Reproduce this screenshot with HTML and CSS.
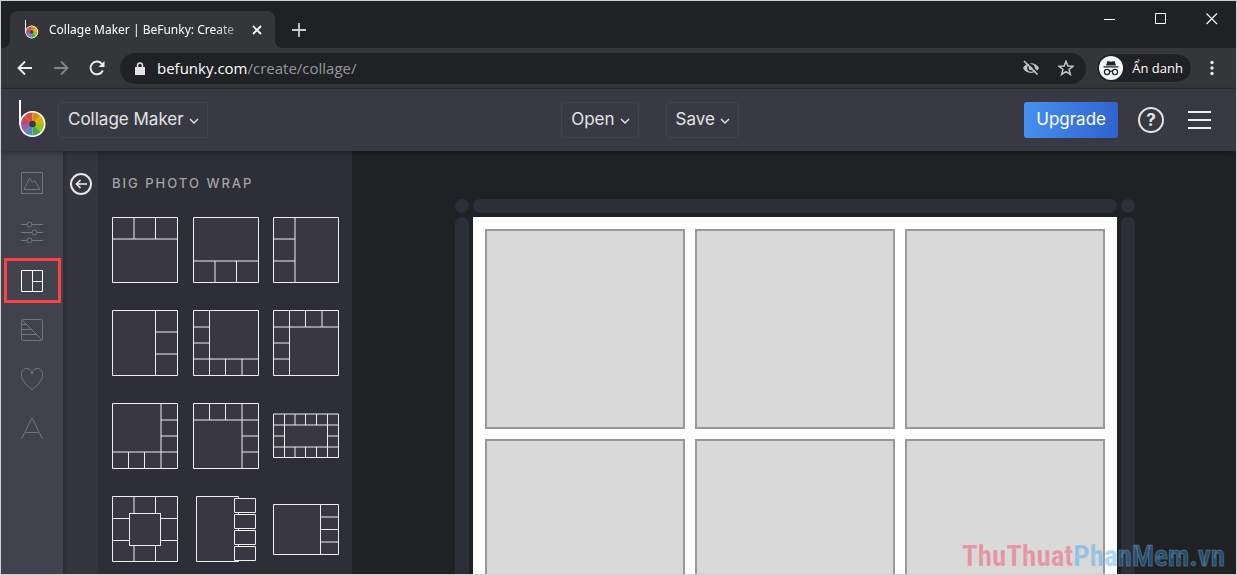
FILE: index.html
```html
<!DOCTYPE html>
<html lang="en">
<head>
<meta charset="utf-8">
<title>Collage Maker | BeFunky</title>
<link rel="stylesheet" href="styles.css">
</head>
<body>
<svg class="defs" aria-hidden="true">
  <symbol id="logo" viewBox="0 0 28 38">
    <g transform="translate(13.5 24)">
      <circle r="13" fill="#fff"/>
      <path d="M0 0-11.500 0A11.500 11.500 0 0 1-8.100-8.100Z" fill="#c6495b"/>
      <path d="M0 0-8.100-8.100A11.500 11.500 0 0 1 0-11.500Z" fill="#ce4f3c"/>
      <path d="M0 0 0-11.500A11.500 11.500 0 0 1 8.100-8.100Z" fill="#e08a16"/>
      <path d="M0 0 8.100-8.100A11.500 11.500 0 0 1 11.500 0Z" fill="#d3b60a"/>
      <path d="M0 0 11.500 0A11.500 11.500 0 0 1 8.100 8.100Z" fill="#96c21c"/>
      <path d="M0 0 8.100 8.100A11.500 11.500 0 0 1 0 11.500Z" fill="#4ca64a"/>
      <path d="M0 0 0 11.500A11.500 11.500 0 0 1-8.100 8.100Z" fill="#5b84c4"/>
      <path d="M0 0-8.100 8.100A11.500 11.500 0 0 1-11.500 0Z" fill="#9560a6"/>
      <circle r="3.300" fill="#393943"/>
    </g>
    <path d="M0 0H2V25H0Z" fill="#fff"/>
  </symbol>
  <symbol id="chevron" viewBox="0 0 10 6"><path d="M1 1 5 5 9 1" fill="none" stroke="currentColor" stroke-width="1.400"/></symbol>
</svg>

<div class="window">
  <header class="titlebar">
    <div class="tab">
      <svg class="favicon" width="14" height="19"><use href="#logo"/></svg>
      <span class="tab-title">Collage Maker | BeFunky: Create</span>
      <button class="plain" aria-label="Close tab"><svg width="10" height="10"><path d="M1 1 9 9M9 1 1 9" stroke="#fff" stroke-width="1.800"/></svg></button>
    </div>
    <button class="plain new-tab" aria-label="New tab"><svg width="14" height="14"><path d="M7 0V14M0 7H14" stroke="#ccc" stroke-width="1.800"/></svg></button>
    <div class="window-controls">
      <button class="plain" aria-label="Minimize"><svg width="12" height="12"><path d="M0 6.500H11" stroke="#fff"/></svg></button>
      <button class="plain" aria-label="Maximize"><svg width="12" height="12"><path d="M.5.5H10.500V10.500H.5Z" fill="none" stroke="#fff"/></svg></button>
      <button class="plain" aria-label="Close"><svg width="12" height="12"><path d="M.5.5 11 11M11 .5.5 11" stroke="#fff" stroke-width="1.100"/></svg></button>
    </div>
  </header>

  <nav class="toolbar" aria-label="Browser">
    <div class="history">
      <button class="plain" aria-label="Back"><svg width="16" height="16" fill="none" stroke="#eee" stroke-width="1.800"><path d="M15 8H2M8 1.500 1.500 8 8 14.500"/></svg></button>
      <button class="plain" aria-label="Forward"><svg width="16" height="16" fill="none" stroke="#85868a" stroke-width="1.800"><path d="M1 8H14M8 1.500 14.500 8 8 14.500"/></svg></button>
      <button class="plain" aria-label="Reload"><svg width="16" height="16"><path d="M13.800 10.500A6.400 6.400 0 1 1 12.700 3.600L14 5" fill="none" stroke="#eee" stroke-width="1.900"/><path d="M15.500 1V7H9.500Z" fill="#eee"/></svg></button>
    </div>
    <div class="address">
      <svg width="10" height="13"><path d="M0 5H1.800V3.500A3.200 3.200 0 0 1 8.200 3.500V5H10V13H0ZM3.300 5H6.700V3.500A1.700 1.700 0 0 0 3.300 3.500Z" fill="#e2e3e5" fill-rule="evenodd"/></svg>
      <span class="url"><b>befunky.com</b>/create/collage/</span>
      <button class="plain" aria-label="Third-party cookies blocked"><svg width="18" height="16"><path d="M1 8C4 1.500 14 1.500 17 8 14 14.500 4 14.500 1 8Z" fill="#bfc0c3"/><circle cx="9" cy="8" r="3.800" fill="#202125"/><circle cx="9" cy="8" r="2.300" fill="#bfc0c3"/><path d="M4 .5 17 13.500" stroke="#202125" stroke-width="1.600"/><path d="M2 1 15.500 14.500" stroke="#bfc0c3" stroke-width="1.700"/></svg></button>
      <button class="plain" aria-label="Bookmark"><svg width="16" height="16"><path d="M8 1.200 9.900 6 15 6.300 11 9.500 12.400 14.500 8 11.700 3.600 14.500 5 9.500 1 6.300 6.100 6Z" fill="none" stroke="#c4c5c7" stroke-width="1.500"/></svg></button>
    </div>
    <div class="incognito">
      <svg width="24" height="24"><circle cx="12" cy="12" r="12" fill="#f3f4f6"/><path d="M8.500 5 12 5.700 15.500 5 17 9.500H7ZM4.500 10.300H19.500V11.500H4.500Z" fill="#222327"/><g fill="none" stroke="#222327" stroke-width="1.200"><circle cx="8" cy="16" r="2.600"/><circle cx="16" cy="16" r="2.600"/><path d="M10.500 15.500Q12 14.800 13.500 15.500"/></g></svg>
      <span>Ẩn danh</span>
    </div>
    <button class="plain" aria-label="Browser menu"><svg width="4" height="16" fill="#e8e8ea"><circle cx="2" cy="2.500" r="1.700"/><circle cx="2" cy="8" r="1.700"/><circle cx="2" cy="13.500" r="1.700"/></svg></button>
  </nav>

  <header class="app-header">
    <div class="group">
      <svg class="logo" width="28" height="38" role="img" aria-label="BeFunky"><use href="#logo"/></svg>
      <button class="menu-button">Collage Maker <svg width="10" height="6"><use href="#chevron"/></svg></button>
    </div>
    <div class="group center">
      <button class="menu-button">Open <svg width="10" height="6"><use href="#chevron"/></svg></button>
      <button class="menu-button">Save <svg width="10" height="6"><use href="#chevron"/></svg></button>
    </div>
    <div class="group end">
      <button class="upgrade">Upgrade</button>
      <button class="help" aria-label="Help">?</button>
      <button class="plain" aria-label="Menu"><svg width="23" height="20"><path d="M0 2H23M0 10H23M0 18H23" stroke="#eee" stroke-width="2"/></svg></button>
    </div>
  </header>

  <div class="workspace">
    <nav class="tools" aria-label="Tools">
      <button class="tool" aria-label="Images"><svg width="22" height="22"><path d="M.5.5H21.500V21.500H.5ZM3 17.500 8.500 6 11.500 10.500 13.500 8.500 19 17.500Z"/></svg></button>
      <button class="tool" aria-label="Customize"><svg width="22" height="22"><path d="M0 3.500H6M11 3.500H22M0 11.500H11M16 11.500H22M0 19.500H6M11 19.500H22"/><circle cx="8.500" cy="3.500" r="2.400"/><circle cx="13.500" cy="11.500" r="2.400"/><circle cx="8.500" cy="19.500" r="2.400"/></svg></button>
      <button class="tool active" aria-label="Layouts"><svg width="22" height="22"><path d="M.5.5H21.500V21.500H.5ZM11.500.5V21.500M11.500 11.500H21.500"/></svg></button>
      <button class="tool" aria-label="Patterns"><svg width="22" height="22"><rect x=".5" y=".5" width="21" height="21" rx="2"/><path d="M1 1 21 21M1 5.500H5M1 10.500H10M1 15.500H16"/></svg></button>
      <button class="tool" aria-label="Graphics"><svg width="22" height="22"><path d="M11 21.500C4 16.500.5 12 .5 6.500.5 2.500 3 .5 5.500.5 8.500.5 11 2.500 11 6 11 2.500 13.500.5 16.500.5 19 .5 21.500 2.500 21.500 6.500 21.500 12 18 16.500 11 21.500Z"/></svg></button>
      <button class="tool" aria-label="Text"><svg width="22" height="22"><path d="M.5 22 11 .8 21.500 22M4.500 15.500H17.500"/></svg></button>
    </nav>
    <div class="back-strip">
      <button class="back" aria-label="Back to layouts"><svg width="12" height="10"><path d="M12 5H1.500M5.500 1 1.500 5 5.500 9" fill="none" stroke="#eee" stroke-width="1.600"/></svg></button>
    </div>
    <section class="panel">
      <h2>BIG PHOTO WRAP</h2>
      <div class="layouts">
        <button class="plain" aria-label="Layout 1"><svg class="thumb" width="66" height="66"><path d="M.5.5H65.500V65.500H.5ZM.5 22H65.500M22 .5V22M43.500.5V22"/></svg></button>
        <button class="plain" aria-label="Layout 2"><svg class="thumb" width="66" height="66"><path d="M.5.5H65.500V65.500H.5ZM.5 44H65.500M22 44V65.500M43.500 44V65.500"/></svg></button>
        <button class="plain" aria-label="Layout 3"><svg class="thumb" width="66" height="66"><path d="M.5.5H65.500V65.500H.5ZM22 .5V65.500M.5 22H22M.5 44H22"/></svg></button>
        <button class="plain" aria-label="Layout 4"><svg class="thumb" width="66" height="66"><path d="M.5.5H65.500V65.500H.5ZM43.500.5V65.500M43.500 22H65.500M43.500 44H65.500"/></svg></button>
        <button class="plain" aria-label="Layout 5"><svg class="thumb" width="66" height="66"><path d="M.5.5H65.500V65.500H.5ZM16.500.5V65.500M.5 49H65.500M.5 17H16.500M.5 33H16.500M32.500 49V65.500M49 49V65.500"/></svg></button>
        <button class="plain" aria-label="Layout 6"><svg class="thumb" width="66" height="66"><path d="M.5.5H65.500V65.500H.5ZM16.500.5V65.500M.5 17H65.500M.5 33H16.500M.5 49H16.500M32.500.5V17M49 .5V17"/></svg></button>
        <button class="plain" aria-label="Layout 7"><svg class="thumb" width="66" height="66"><path d="M.5.5H65.500V65.500H.5ZM49 .5V65.500M.5 49H65.500M49 17H65.500M49 33H65.500M16.500 49V65.500M32.500 49V65.500"/></svg></button>
        <button class="plain" aria-label="Layout 8"><svg class="thumb" width="66" height="66"><path d="M.5.5H65.500V65.500H.5ZM49 .5V65.500M.5 17H65.500M49 33H65.500M49 49H65.500M16.500.5V17M32.500.5V17"/></svg></button>
        <button class="plain" aria-label="Layout 9"><svg class="thumb" width="66" height="66"><path d="M.5 11H65.500V54.500H.5ZM.5 22H65.500M.5 44H65.500M11.500 11V54.500M54.500 11V54.500M22 11V22M32.500 11V22M43.500 11V22M22 44V54.500M32.500 44V54.500M43.500 44V54.500M.5 33H11.500M54.500 33H65.500"/></svg></button>
        <button class="plain" aria-label="Layout 10"><svg class="thumb" width="66" height="66"><path d="M.5.5H65.500V65.500H.5ZM22 .5V65.500M43.500.5V65.500M.5 22.500H65.500M.5 44.500H65.500"/><rect x="17.500" y="17.500" width="31" height="32"/></svg></button>
        <button class="plain" aria-label="Layout 11"><svg class="thumb" width="66" height="66"><path d="M3.500.5H45.500V65.500H3.500Z"/><path d="M41.500 2.500H62.500V16.500H41.500ZM41.500 18.500H62.500V32.500H41.500ZM41.500 34.500H62.500V48.500H41.500ZM41.500 50.500H62.500V64.500H41.500Z"/></svg></button>
        <button class="plain" aria-label="Layout 12"><svg class="thumb" width="66" height="66"><path d="M.5 8.500H65.500V58.500H.5ZM47.500 8.500V58.500M47.500 21H65.500M47.500 33.500H65.500M47.500 46H65.500"/></svg></button>
      </div>
    </section>
    <main class="stage">
      <div class="board">
        <i class="handle"></i><i class="handle"></i><i class="handle"></i>
        <i class="handle"></i>
        <div class="paper">
          <div class="cell"></div><div class="cell"></div><div class="cell"></div>
          <div class="cell"></div><div class="cell"></div><div class="cell"></div>
        </div>
        <i class="handle"></i>
      </div>
    </main>
  </div>
  <div class="watermark"><span>ThuThuat</span>PhanMem.vn</div>
</div>
</body>
</html>
```
FILE: styles.css
```css
* { box-sizing: border-box; }
body { margin: 0; background: #202124; }
.defs { position: absolute; width: 0; height: 0; }
button { font: inherit; color: inherit; cursor: pointer; }
svg { display: block; flex: none; }

.plain {
  display: flex;
  align-items: center;
  justify-content: center;
  padding: 0;
  border: 0;
  background: none;
}

.window {
  position: relative;
  display: flex;
  flex-direction: column;
  height: 100vh;
  overflow: hidden;
  border: 1px solid #cdd0cd;
  background: #202124;
  color: #eee;
  font-family: "Open Sans", "Noto Sans", sans-serif;
}

/* Browser chrome */
.titlebar {
  display: flex;
  flex: none;
  align-items: flex-start;
  height: 47px;
  padding-left: 9px;
}
.tab {
  position: relative;
  display: flex;
  align-items: center;
  gap: 10px;
  width: 265px;
  height: 37px;
  margin-top: 10px;
  padding: 0 13px 0 15px;
  border-radius: 8px 8px 0 0;
  background: #35363a;
}
.tab::before,
.tab::after {
  content: "";
  position: absolute;
  bottom: 0;
  width: 8px;
  height: 8px;
}
.tab::before { right: 100%; background: radial-gradient(circle at 0 0, transparent 8px, #35363a 8px); }
.tab::after { left: 100%; background: radial-gradient(circle at 100% 0, transparent 8px, #35363a 8px); }
.tab-title {
  flex: 1;
  white-space: nowrap;
  font-family: "Noto Sans", "Open Sans", sans-serif;
  font-size: 12px;
  line-height: 20px;
  color: #fff;
  -webkit-mask-image: linear-gradient(90deg, #000 85%, rgba(0, 0, 0, .3));
  mask-image: linear-gradient(90deg, #000 85%, rgba(0, 0, 0, .3));
}
.new-tab { margin: 22px 0 0 17px; }
.window-controls {
  display: flex;
  gap: 39px;
  margin: 12px 18px 0 auto;
}
.toolbar {
  display: flex;
  flex: none;
  align-items: center;
  height: 41px;
  padding: 0 22px 0 16px;
  border-bottom: 1px solid #292a2c;
  background: #35363a;
}
.history { display: flex; gap: 20px; }
.address {
  display: flex;
  flex: 1;
  align-items: center;
  gap: 18px;
  height: 31px;
  margin: 0 10px 0 15px;
  padding: 0 12px 0 15px;
  border-radius: 16px;
  background: #202125;
}
.url {
  flex: 1;
  margin-left: -6px;
  font-size: 15px;
  line-height: 20px;
  color: #96989c;
}
.url b { font-weight: 400; color: #fff; }
.incognito {
  display: flex;
  align-items: center;
  gap: 9px;
  height: 30px;
  margin-right: 18px;
  padding: 0 8px 0 2px;
  border: 1px solid #3d3e42;
  border-radius: 15px;
  background: #202125;
  color: #fff;
  font-size: 13px;
  line-height: 20px;
}

/* App header */
.app-header {
  position: relative;
  z-index: 1;
  display: grid;
  grid-template-columns: 1fr auto 1fr;
  align-items: center;
  flex: none;
  height: 62px;
  padding: 0 25px 0 18px;
  background: #393943;
  box-shadow: 0 2px 6px rgba(0, 0, 0, .35);
  font-family: Inter, sans-serif;
  font-size: 17px;
  line-height: 24px;
  color: #e4e4e6;
}
.group { display: flex; align-items: center; gap: 11px; }
.center { gap: 27px; padding-left: 70px; }
.end { justify-content: flex-end; gap: 20px; }
.logo { margin-bottom: 2px; }
.menu-button,
.upgrade {
  display: flex;
  align-items: center;
  gap: 5px;
  height: 36px;
  padding: 0 8px 2px 9px;
  border: 1px solid #43434f;
  border-radius: 3px;
  background: none;
  white-space: nowrap;
}
.menu-button svg { margin-top: 3px; }
.upgrade {
  padding: 0 12px 2px;
  border: 0;
  background: linear-gradient(100deg, #4692f0, #3062cc);
  color: #fff;
}
.help {
  width: 26px;
  height: 26px;
  padding: 0;
  border: 2px solid #e4e4e6;
  border-radius: 50%;
  background: none;
  font-size: 17px;
  font-weight: 700;
  line-height: 20px;
}
.end .plain { margin-left: 4px; }

/* Editor */
.workspace { display: flex; flex: 1; min-height: 0; }
.tools {
  display: flex;
  flex: none;
  flex-direction: column;
  align-items: center;
  gap: 4px;
  width: 62px;
  padding-top: 9px;
  background: #40424e;
}
.tool {
  display: flex;
  flex: none;
  align-items: center;
  justify-content: center;
  width: 57px;
  height: 45px;
  padding: 0;
  border: 3px solid transparent;
  background: none;
}
.tool svg { fill: none; stroke: #747582; }
.tool.active { border-color: #fb4143; }
.tool.active svg { stroke: #fff; }
.back-strip {
  flex: none;
  width: 35px;
  padding: 22px 0 0 7px;
  background: linear-gradient(90deg, #2d2d35, #35353e 5px);
}
.back {
  display: flex;
  align-items: center;
  justify-content: center;
  width: 22px;
  height: 22px;
  padding: 0;
  border: 2px solid #e4e4e6;
  border-radius: 50%;
  background: none;
}
.panel {
  flex: none;
  width: 254px;
  padding: 22px 13px 0 14px;
  background: #2e2e37;
}
.panel h2 {
  margin: 0 0 24px;
  font-family: Inter, sans-serif;
  font-size: 13px;
  font-weight: 500;
  line-height: 20px;
  letter-spacing: 2px;
  color: #a3a3a5;
}
.layouts {
  display: grid;
  grid-template-columns: repeat(3, auto);
  justify-content: space-between;
  row-gap: 27px;
}
.thumb { fill: #393842; stroke: #eee; stroke-width: 1; }
.stage { flex: 1; padding: 48px 101px 0 103px; background: #202124; }
.board {
  display: grid;
  grid-template-columns: 14px 1fr 14px;
  grid-template-rows: 14px auto;
  gap: 4px;
}
.handle { border-radius: 7px; background: #2d2f38; }
.paper {
  display: grid;
  grid-template-columns: repeat(3, 1fr);
  gap: 10px;
  padding: 12px;
  background: #fff;
}
.cell { aspect-ratio: 1; border: 2px solid #999; background: #d9d9d9; }

.watermark {
  position: absolute;
  right: 11px;
  bottom: 0;
  z-index: 2;
  font-family: "Roboto Condensed", Roboto, sans-serif;
  font-size: 29px;
  font-weight: 700;
  line-height: 36px;
  color: rgba(32, 155, 237, .4);
  -webkit-text-stroke: 1px rgba(220, 220, 220, .25);
}
.watermark span { color: rgba(250, 32, 72, .38); }
```
